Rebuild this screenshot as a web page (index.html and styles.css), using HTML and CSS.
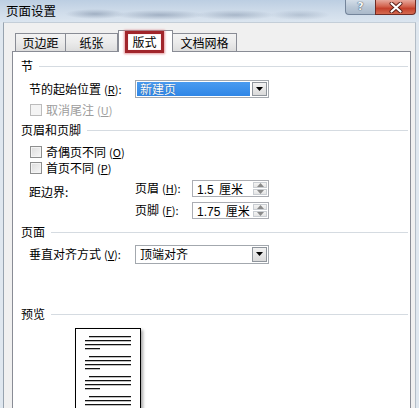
FILE: index.html
```html
<!DOCTYPE html>
<html lang="zh-CN">
<head>
<meta charset="utf-8">
<title>页面设置</title>
<link rel="stylesheet" href="styles.css">
</head>
<body>
<div class="window">
  <div class="titlebar">
    <span class="title">页面设置</span>
    <div class="caption-btns">
      <span class="btn-help">?</span>
      <span class="btn-close">
        <svg width="14" height="11" viewBox="0 0 14 11">
          <path d="M2.5 1.5 L11.5 9.5 M11.5 1.5 L2.5 9.5" stroke="#5a1e18" stroke-width="4" stroke-linecap="round"/>
          <path d="M2.5 1.5 L11.5 9.5 M11.5 1.5 L2.5 9.5" stroke="#ffffff" stroke-width="2.2" stroke-linecap="round"/>
        </svg>
      </span>
    </div>
  </div>
  <div class="client">
    <div class="tabs">
      <div class="tab">页边距</div>
      <div class="tab">纸张</div>
      <div class="tab active"><span class="mark">版式</span></div>
      <div class="tab">文档网格</div>
    </div>
    <div class="panel">
      <div class="sec sec-first">节</div>
      <div class="row row-a">
        <span class="lbl">节的起始位置<span class="ak">(<u>R</u>):</span></span>
        <div class="combo">
          <span class="val sel">新建页</span>
          <span class="dd"><svg width="7" height="4" viewBox="0 0 7 4"><path d="M0 0 H7 L3.5 4 Z" fill="#000"/></svg></span>
        </div>
      </div>
      <div class="chk chk-dis"><span class="box"></span>取消尾注<span class="ak">(<u>U</u>)</span></div>
      <div class="sec sec-hf">页眉和页脚</div>
      <div class="chk chk-first"><span class="box"></span>奇偶页不同<span class="ak">(<u>O</u>)</span></div>
      <div class="chk"><span class="box"></span>首页不同<span class="ak">(<u>P</u>)</span></div>
      <div class="margins">
        <span class="lbl lbl-top">距边界:</span>
        <div class="spins">
          <div class="spin-row">
            <span class="slbl">页眉<span class="ak">(<u>H</u>):</span></span>
            <div class="spin">
              <span class="sval">1.5 <span class="unit">厘米</span></span>
              <span class="arrows">
                <span class="ar"><svg width="7" height="4" viewBox="0 0 7 4"><path d="M0 4 H7 L3.5 0 Z" fill="#8a8a8a"/></svg></span>
                <span class="ar"><svg width="7" height="4" viewBox="0 0 7 4"><path d="M0 0 H7 L3.5 4 Z" fill="#8a8a8a"/></svg></span>
              </span>
            </div>
          </div>
          <div class="spin-row">
            <span class="slbl">页脚<span class="ak">(<u>F</u>):</span></span>
            <div class="spin">
              <span class="sval">1.75 <span class="unit">厘米</span></span>
              <span class="arrows">
                <span class="ar"><svg width="7" height="4" viewBox="0 0 7 4"><path d="M0 4 H7 L3.5 0 Z" fill="#8a8a8a"/></svg></span>
                <span class="ar"><svg width="7" height="4" viewBox="0 0 7 4"><path d="M0 0 H7 L3.5 4 Z" fill="#8a8a8a"/></svg></span>
              </span>
            </div>
          </div>
        </div>
      </div>
      <div class="sec sec-page">页面</div>
      <div class="row row-v">
        <span class="lbl">垂直对齐方式<span class="ak">(<u>V</u>):</span></span>
        <div class="combo combo-v">
          <span class="val">顶端对齐</span>
          <span class="dd"><svg width="7" height="4" viewBox="0 0 7 4"><path d="M0 0 H7 L3.5 4 Z" fill="#000"/></svg></span>
        </div>
      </div>
      <div class="sec sec-prev">预览</div>
      <div class="page">
        <div class="ln ind"></div><div class="ln"></div><div class="ln"></div><div class="ln short"></div>
        <div class="ln ind"></div><div class="ln"></div><div class="ln"></div><div class="ln short"></div>
        <div class="ln ind"></div><div class="ln"></div><div class="ln"></div><div class="ln short"></div>
        <div class="ln ind"></div><div class="ln"></div><div class="ln"></div><div class="ln short"></div>
      </div>
    </div>
  </div>
</div>
</body>
</html>
```

FILE: styles.css
```css
html, body {
  margin: 0;
  padding: 0;
  width: 419px;
  height: 408px;
  overflow: hidden;
  background: #dfe7ef;
}
body {
  font-family: "Noto Sans CJK SC", "Noto Sans", sans-serif;
  font-size: 12px;
  color: #000;
}
u { text-decoration: underline; text-decoration-thickness: 1px; text-underline-offset: 1px; }
.ak {
  margin-left: 3px;
  font-size: 11px;
}

.window {
  width: 419px;
  height: 408px;
  display: flex;
  flex-direction: column;
  background: #dfe7ef;
  overflow: hidden;
}

/* title bar */
.titlebar {
  height: 22px;
  flex: none;
  display: flex;
  align-items: flex-start;
  background:
    radial-gradient(ellipse 30px 5px at 95px 14px, rgba(70,90,120,.35), transparent),
    radial-gradient(ellipse 45px 5px at 160px 15px, rgba(70,90,120,.35), transparent),
    radial-gradient(ellipse 40px 5px at 235px 15px, rgba(70,90,120,.30), transparent),
    radial-gradient(ellipse 30px 5px at 300px 15px, rgba(70,90,120,.22), transparent),
    linear-gradient(#bccee2, #cfdcea 55%, #dbe5ef);
}
.title {
  font-size: 12.5px;
  line-height: 22px;
  padding-left: 6px;
  color: #000;
}
.caption-btns {
  margin-left: auto;
  margin-right: 3px;
  display: flex;
}
.btn-help {
  width: 30px;
  height: 15px;
  box-sizing: border-box;
  border: 1px solid #73849a;
  border-top: none;
  border-right: none;
  border-radius: 0 0 0 4px;
  background: linear-gradient(#d3dde8, #b9c7d6 50%, #aab9ca);
  color: #f4f7fa;
  font-family: "DejaVu Sans", sans-serif;
  font-weight: bold;
  font-size: 11px;
  line-height: 13px;
  text-align: center;
  text-shadow: 0 0 1px #3a4a5e, 0 0 1px #3a4a5e;
}
.btn-close {
  width: 41px;
  height: 15px;
  box-sizing: border-box;
  border: 1px solid #6e2b24;
  border-top: none;
  border-radius: 0 0 4px 0;
  background: linear-gradient(#e7a89c, #d3644f 45%, #c4412c 60%, #d46a50);
  display: flex;
  align-items: center;
  justify-content: center;
}

/* client area */
.client {
  flex: 1;
  margin: 0 3px 0 3px;
  border-left: 1px solid #97a3af;
  border-right: 1px solid #b3bdc7;
  border-top: 1px solid #c4ced8;
  background: #f0f0f0;
  padding: 0 4px 0 8px;
  display: flex;
  flex-direction: column;
  min-height: 0;
}

/* tabs */
.tabs {
  display: flex;
  align-items: flex-end;
  height: 21px;
  padding-top: 7px;
  padding-left: 3px;
  flex: none;
  position: relative;
  z-index: 1;
}
.tab {
  height: 18px;
  box-sizing: border-box;
  border: 1px solid #898c95;
  border-bottom: none;
  background: linear-gradient(#f3f3f3, #ebebeb 50%, #dddddd);
  text-align: center;
  line-height: 17px;
  padding: 0 6px;
}
.tab:nth-child(1) { width: 51px; }
.tab:nth-child(2) { width: 52px; border-left: none; }
.tab:nth-child(4) { width: 64px; border-left: none; }
.tab.active {
  height: 22px;
  margin-bottom: -1px;
  background: #fff;
  padding: 0 8px 0 6px;
  border-color: #898c95;
  display: flex;
}
.mark {
  width: 39px;
  height: 22px;
  box-sizing: border-box;
  border: 3px solid #a1252b;
  box-shadow: 0 0 2px 1px rgba(215,110,115,.7), inset 0 0 1px rgba(215,110,115,.7);
  line-height: 16px;
  text-align: center;
  background: #fff;
}

/* panel */
.panel {
  flex: 1;
  min-height: 0;
  overflow: hidden;
  box-sizing: border-box;
  border: 1px solid #898c95;
  border-bottom: none;
  background: #fff;
  display: flex;
  flex-direction: column;
}
.sec {
  height: 14px;
  line-height: 14px;
  display: flex;
  align-items: center;
  margin-left: 8px;
  margin-right: 2px;
  flex: none;
}
.sec::after {
  content: "";
  flex: 1;
  height: 1px;
  background: #d5dbe1;
  margin-left: 6px;
}
.sec-first { margin-top: 7px; }
.sec-hf { margin-top: 3px; }
.sec-page { margin-top: 5px; }
.sec-prev { margin-top: 43px; }

.row {
  height: 20px;
  display: flex;
  align-items: center;
  padding-left: 16px;
  flex: none;
}
.row-a { margin-top: 6px; }
.row-v { margin-top: 5px; }
.lbl {
  width: 106px;
  flex: none;
  line-height: 14px;
  white-space: nowrap;
}

.combo {
  width: 134px;
  height: 18px;
  box-sizing: border-box;
  border: 1px solid #a3a8ae;
  background: #fff;
  padding: 1px;
  display: flex;
}
.combo-v { height: 19px; }
.val {
  flex: 1;
  line-height: 14px;
  padding-left: 3px;
  margin-right: 2px;
  white-space: nowrap;
}
.val.sel {
  background: linear-gradient(#4a9bf0, #2f86e6);
  color: #fff;
  text-shadow: 0 0 1px #1d4f8a;
}
.dd {
  width: 15px;
  box-sizing: border-box;
  border: 1px solid #8f959c;
  background: linear-gradient(#f2f2f2, #dadada);
  display: flex;
  align-items: center;
  justify-content: center;
}

/* checkboxes */
.chk {
  height: 16px;
  display: flex;
  align-items: center;
  padding-left: 17px;
  flex: none;
  line-height: 14px;
}
.chk-dis { height: 20px; margin-top: 1px; color: #9c9c9c; }
.chk-first { margin-top: 7px; }
.box {
  width: 12px;
  height: 12px;
  box-sizing: border-box;
  border: 1px solid #8e8f8f;
  background: linear-gradient(135deg, #dcdcdc, #f7f7f7);
  box-shadow: inset 0 0 0 1px #f4f4f4;
  margin-right: 4px;
  flex: none;
}
.chk-dis .box {
  border-color: #bcbcbc;
  background: #f4f4f4;
}

/* margins */
.margins {
  margin-top: 2px;
  padding-left: 16px;
  display: flex;
  flex: none;
}
.lbl-top {
  margin-top: 7px;
  align-self: flex-start;
}
.spins {
  display: flex;
  flex-direction: column;
  gap: 2px;
}
.spin-row {
  height: 20px;
  display: flex;
  align-items: center;
}
.slbl {
  width: 57px;
  line-height: 14px;
  white-space: nowrap;
}
.spin {
  width: 77px;
  height: 17px;
  box-sizing: border-box;
  border: 1px solid #abadb3;
  background: #fff;
  display: flex;
  padding: 1px;
}
.sval {
  flex: 1;
  padding-left: 3px;
  line-height: 13px;
  font-family: "Liberation Sans", "Noto Sans CJK SC", sans-serif;
  font-size: 12px;
  word-spacing: 2px;
  white-space: nowrap;
}
.unit {
  font-family: "Noto Sans CJK SC", sans-serif;
}
.arrows {
  width: 14px;
  display: flex;
  flex-direction: column;
  gap: 1px;
}
.ar {
  flex: 1;
  box-sizing: border-box;
  border: 1px solid #c9cdd2;
  background: linear-gradient(#f4f4f4, #e4e4e4);
  display: flex;
  align-items: center;
  justify-content: center;
}

/* preview page */
.page {
  margin-top: 7px;
  margin-left: 62px;
  width: 66px;
  height: 95px;
  box-sizing: border-box;
  border: 1px solid #000;
  background: #fff;
  box-shadow: 2px 2px 3px rgba(0,0,0,.35);
  padding: 7px 0 0 9px;
  flex: none;
}
.ln {
  width: 46px;
  height: 1px;
  background: #111;
  box-shadow: 0 1px 0 rgba(0,0,0,.25);
  margin-bottom: 3px;
}
.ln.ind { width: 42px; margin-left: 4px; }
.ln.short { width: 15px; margin-bottom: 7px; }
```
